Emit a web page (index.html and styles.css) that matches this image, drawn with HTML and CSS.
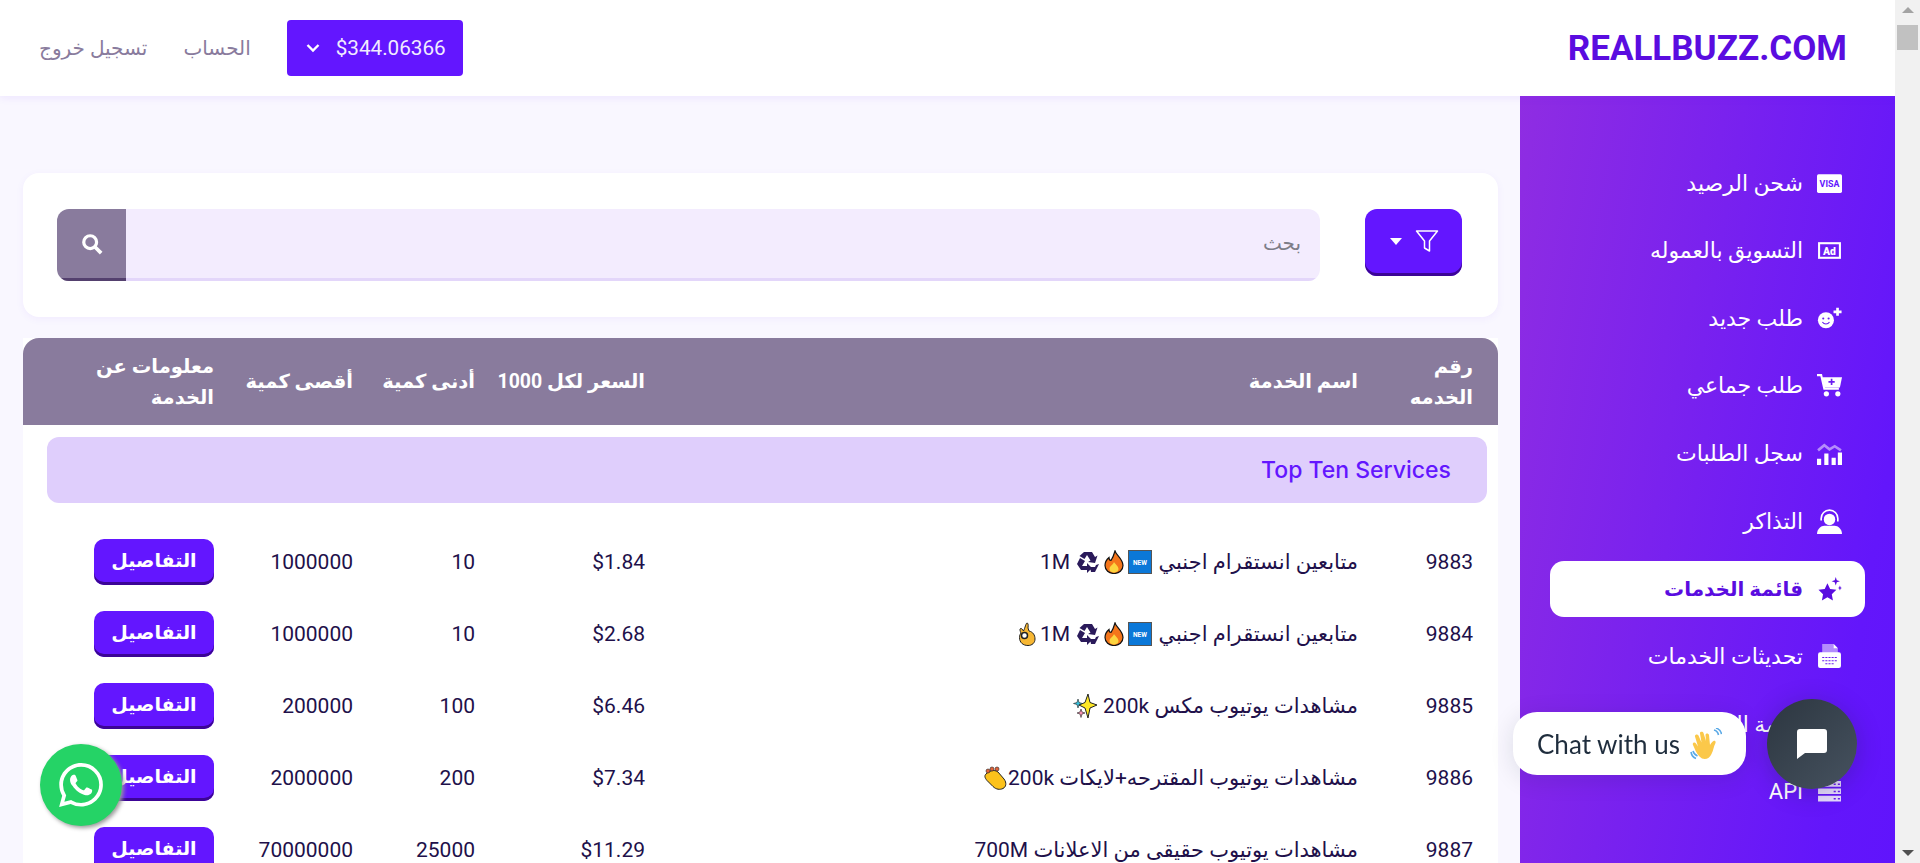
FILE: index.html
```html
<!DOCTYPE html>
<html lang="ar">

<head>
 <meta charset="UTF-8">
 <title>REALLBUZZ.COM</title>
 <link rel="stylesheet" href="styles.css">
</head>

<body>

 <svg class="defs" aria-hidden="true">
  <symbol id="e-new" viewBox="0 0 24 24">
   <rect x="0.5" y="0.5" width="23" height="23" fill="#0b78d8" stroke="#555"/>
   <text x="12" y="14.500" font-size="6.500" font-weight="700" fill="#fff" text-anchor="middle" font-family="Roboto">NEW</text>
  </symbol>
  <symbol id="e-fire" viewBox="0 0 24 24">
   <path d="M13 1c1 4 8 8 8 14.500 0 4.500-4 8-9 8s-9-3.500-9-8c0-3 1-5.500 4-8 0 2 1 3 2 3 2-3 3-6 4-9.500z" fill="#f4761b" stroke="#111" stroke-width="1.200"/>
   <path d="M12 12c1 2 4.500 4 4.500 7 0 2-2 3.500-4.500 3.500S7.500 21 7.500 19c0-3 3.500-4 4.500-7z" fill="#fcd53f"/>
  </symbol>
  <symbol id="e-recycle" viewBox="0 0 24 24">
   <path d="M8 2h8l3 5 2.500-1.500L19 13l-7-1 2.500-1.500L11 5 8.500 9 3.500 6zM1 14l3-6 5 3-3 5h5v-3l5 5-5 5v-3H5zM23 14l-4 8h-4l-1-5h5l1-2z" fill="#2a1a5a"/>
  </symbol>
  <symbol id="e-ok" viewBox="0 0 24 24">
   <path d="M12 1c1 0 1.500 1.500 1 5l1 3c4 1 6 4 6 8 0 4-3 6.500-7 6.500-5 0-8.500-3-8.500-8 0-2 .5-3 1.500-4.500-1-2-1.500-4-.5-4.500 1-.5 2 1 3 2.500C10 6 11 1 12 1z" fill="#f7b733" stroke="#222"/>
   <circle cx="9.500" cy="13.500" r="3" fill="#fff" stroke="#222" stroke-width="1.500"/>
  </symbol>
  <symbol id="e-sparkle" viewBox="0 0 24 24">
   <path d="M15 0l2 8.500 7 2.500-7 3-2 10-3-10-6-3 6-2.500z" fill="#fde725" stroke="#222"/>
   <path d="M5 5l1 3.500 3.500 1-3.500 1-1 3.500-1-3.500-3.500-1 3.500-1z" fill="#35c4e0" stroke="#222" stroke-width=".6"/>
   <path d="M8 15l1 3 3 1-3 1-1 3.500-1-3.500-3-1 3-1z" fill="#f58fb0" stroke="#222" stroke-width=".6"/>
  </symbol>
  <symbol id="e-clap" viewBox="0 0 24 24">
   <path d="M3 8c3-3 8-5 12-2l6 7c3 4 2 8-1 9.500-3 1.500-7 1-10-2l-6-6C2 12 1 10 3 8z" fill="#fcc21b" stroke="#222"/>
   <circle cx="9" cy="3" r="2" fill="#e2633a" stroke="#222" stroke-width=".6"/><circle cx="14" cy="3" r="2" fill="#e2633a" stroke="#222" stroke-width=".6"/><circle cx="5" cy="5" r="2" fill="#e2633a" stroke="#222" stroke-width=".6"/>
  </symbol>
 </svg>

 <div class="app">
  <div class="page" dir="rtl">

   <header class="topbar">
    <a class="logo">REALLBUZZ.COM</a>
    <nav class="top-links">
     <button class="balance">
      <span>$344.06366</span>
      <svg viewBox="0 0 14 10" width="14" height="10"><path d="M1.500 2l5.500 5.500L12.500 2" fill="none" stroke="#fff" stroke-width="2.400"/></svg>
     </button>
     <a class="top-link">الحساب</a>
     <a class="top-link">تسجيل خروج</a>
    </nav>
   </header>

   <div class="content">
    <aside class="sidebar">
     <a class="side-item"><svg class="side-icon" viewBox="0 0 24 18"><rect width="24" height="18" rx="1.500" fill="#fff"/><text x="12" y="12.500" font-size="8.500" font-weight="700" fill="#6316ff" text-anchor="middle" font-family="Roboto">VISA</text></svg><span>شحن الرصيد</span></a>
     <a class="side-item"><svg class="side-icon" viewBox="0 0 24 18"><rect x="2" y="2" width="20" height="14" fill="none" stroke="#fff" stroke-width="2"/><text x="12" y="13" font-size="10" font-weight="900" fill="#fff" text-anchor="middle" font-family="Roboto">Ad</text></svg><span>التسويق بالعموله</span></a>
     <a class="side-item"><svg class="side-icon" viewBox="0 0 28 24"><circle cx="10" cy="14" r="9" fill="#fff"/><circle cx="7" cy="12" r="1.200" fill="#6b1cf0"/><circle cx="13" cy="12" r="1.200" fill="#6b1cf0"/><path d="M6 16c2 3 6 3 8 0" fill="none" stroke="#6b1cf0" stroke-width="1.200"/><path d="M23 0v9M18.500 4.500h9" stroke="#fff" stroke-width="3"/></svg><span>طلب جديد</span></a>
     <a class="side-item"><svg class="side-icon" viewBox="0 0 24 22"><path d="M0 1h4l3 13h14" fill="none" stroke="#fff" stroke-width="2"/><path d="M5 3h19l-2 10H7z" fill="#fff"/><circle cx="9" cy="19" r="2.500" fill="#fff"/><circle cx="20" cy="19" r="2.500" fill="#fff"/><path d="M14 4.500v6M11 7.500h6" stroke="#6b1cf0" stroke-width="1.600"/></svg><span>طلب جماعي</span></a>
     <a class="side-item"><svg class="side-icon" viewBox="0 0 24 22"><path d="M1 8l6-5 5 4 5-3 6 4" fill="none" stroke="#fff" stroke-opacity=".5" stroke-width="2.500"/><path d="M0 16h4v6H0zM7 11h4v11H7zM14 15h4v7h-4zM20 10h4v12h-4z" fill="#fff"/></svg><span>سجل الطلبات</span></a>
     <a class="side-item"><svg class="side-icon" viewBox="0 0 24 24"><path d="M0 24c0-5 4-8 7-8h10c3 0 7 3 7 8z" fill="#fff"/><circle cx="12" cy="10" r="5.500" fill="#fff"/><path d="M4 11V9a8 8 0 0116 0v3" fill="none" stroke="#fff" stroke-width="1.600"/></svg><span>التذاكر</span></a>
     <a class="side-item active"><svg class="side-icon" viewBox="0 0 24 24"><path d="M10 7l2.600 5.500 6 .8-4.400 4.200 1.100 6-5.300-3-5.300 3 1.100-6L1.400 13.300l6-.8z" fill="#5a0ce0"/><path d="M18 1l1 3 3 1-3 1-1 3-1-3-3-1 3-1zM22 9l.700 2 1.300.5-1.300.5-.700 2-.700-2-1.300-.5 1.300-.5z" fill="#5a0ce0"/></svg><span>قائمة الخدمات</span></a>
     <a class="side-item"><svg class="side-icon" viewBox="0 0 24 24"><path d="M5 0h11l4 4v8H5z" fill="#fff" fill-opacity=".5"/><path d="M16 0l4 4h-4z" fill="#fff"/><rect x="1" y="8" width="22" height="15" rx="2" fill="#fff"/><path d="M5 13h14M5 16h14M8 19h8" stroke="#6b1cf0" stroke-width="1" stroke-dasharray="2 1"/></svg><span>تحديثات الخدمات</span></a>
     <a class="side-item"><svg class="side-icon" viewBox="0 0 24 24"><circle cx="12" cy="12" r="10" fill="#fff"/></svg><span>خدمة العملاء</span></a>
     <a class="side-item"><svg class="side-icon" viewBox="0 0 24 20"><path d="M1 0h22v5.500H1zM1 7h22v5.500H1zM1 14h22v5.500H1z" fill="#fff" fill-opacity=".85"/><path d="M16 3h2M20 3h2M16 10h2M20 10h2M16 17h2M20 17h2" stroke="#6b1cf0" stroke-width="1.500"/></svg><span>API</span></a>
    </aside>

    <main class="main">
     <section class="filter-card">
      <button class="filter-btn">
       <svg viewBox="0 0 24 24" width="24" height="24"><path d="M1.500 2h21l-8 10v10l-5-3v-7z" fill="none" stroke="#fff" stroke-width="1.500" stroke-linejoin="round"/></svg>
       <span class="caret"></span>
      </button>
      <form class="search">
       <input class="search-input" type="text" placeholder="بحث">
       <button class="search-btn" type="button">
        <svg viewBox="0 0 24 24" width="22" height="22"><circle cx="10" cy="10" r="7" fill="none" stroke="#fff" stroke-width="3.500"/><path d="M15 15l7 7" stroke="#fff" stroke-width="4"/></svg>
       </button>
      </form>
     </section>

     <table class="services">
      <colgroup>
       <col class="c-id"><col class="c-name"><col class="c-price"><col class="c-min"><col class="c-max"><col class="c-info">
      </colgroup>
      <thead>
       <tr>
        <th>رقم<br>الخدمه</th>
        <th>اسم الخدمة</th>
        <th>السعر لكل 1000</th>
        <th>أدنى كمية</th>
        <th>أقصى كمية</th>
        <th>معلومات عن<br>الخدمة</th>
       </tr>
      </thead>
      <tbody>
       <tr class="group-row"><td colspan="6"><div class="group-title">Top Ten Services</div></td></tr>
       <tr>
        <td>9883</td>
        <td>متابعين انستقرام اجنبي <svg class="emo"><use href="#e-new"/></svg><svg class="emo"><use href="#e-fire"/></svg><svg class="emo"><use href="#e-recycle"/></svg> 1M</td>
        <td>$1.84</td><td>10</td><td>1000000</td>
        <td><button class="details">التفاصيل</button></td>
       </tr>
       <tr>
        <td>9884</td>
        <td>متابعين انستقرام اجنبي <svg class="emo"><use href="#e-new"/></svg><svg class="emo"><use href="#e-fire"/></svg><svg class="emo"><use href="#e-recycle"/></svg> 1M<svg class="emo"><use href="#e-ok"/></svg></td>
        <td>$2.68</td><td>10</td><td>1000000</td>
        <td><button class="details">التفاصيل</button></td>
       </tr>
       <tr>
        <td>9885</td>
        <td>مشاهدات يوتيوب مكس 200k <svg class="emo"><use href="#e-sparkle"/></svg></td>
        <td>$6.46</td><td>100</td><td>200000</td>
        <td><button class="details">التفاصيل</button></td>
       </tr>
       <tr>
        <td>9886</td>
        <td>مشاهدات يوتيوب المقترحه+لايكات 200k<svg class="emo"><use href="#e-clap"/></svg></td>
        <td>$7.34</td><td>200</td><td>2000000</td>
        <td><button class="details">التفاصيل</button></td>
       </tr>
       <tr>
        <td>9887</td>
        <td>مشاهدات يوتيوب حقيقى من الاعلانات 700M</td>
        <td>$11.29</td><td>25000</td><td>70000000</td>
        <td><button class="details">التفاصيل</button></td>
       </tr>
      </tbody>
     </table>
    </main>
   </div>
  </div>

  <div class="scrollbar">
   <span class="arrow-up"></span>
   <span class="thumb"></span>
   <span class="arrow-down"></span>
  </div>
 </div>

 <a class="whatsapp">
  <svg viewBox="0 0 24 24" width="44" height="44"><path fill="#fff" d="M17.472 14.382c-.297-.149-1.758-.867-2.03-.967-.273-.099-.471-.148-.67.15-.197.297-.767.966-.94 1.164-.173.199-.347.223-.644.075-.297-.15-1.255-.463-2.39-1.475-.883-.788-1.48-1.761-1.653-2.059-.173-.297-.018-.458.13-.606.134-.133.298-.347.446-.52.149-.174.198-.298.298-.497.099-.198.05-.371-.025-.52-.075-.149-.669-1.612-.916-2.207-.242-.579-.487-.5-.669-.51-.173-.008-.371-.01-.57-.01-.198 0-.52.074-.792.372-.272.297-1.04 1.016-1.04 2.479 0 1.462 1.065 2.875 1.213 3.074.149.198 2.096 3.2 5.077 4.487.709.306 1.262.489 1.694.625.712.227 1.36.195 1.871.118.571-.085 1.758-.719 2.006-1.413.248-.694.248-1.289.173-1.413-.074-.124-.272-.198-.57-.347m-5.421 7.403h-.004a9.87 9.87 0 01-5.031-1.378l-.361-.214-3.741.982.998-3.648-.235-.374a9.86 9.86 0 01-1.51-5.26c.001-5.45 4.436-9.884 9.888-9.884 2.64 0 5.122 1.03 6.988 2.898a9.825 9.825 0 012.893 6.994c-.003 5.45-4.437 9.884-9.885 9.884m8.413-18.297A11.815 11.815 0 0012.05 0C5.495 0 .16 5.335.157 11.892c0 2.096.547 4.142 1.588 5.945L.057 24l6.305-1.654a11.882 11.882 0 005.683 1.448h.005c6.554 0 11.89-5.335 11.893-11.893a11.821 11.821 0 00-3.48-8.413z"/></svg>
 </a>

 <div class="chat-label" dir="ltr">
  <span>Chat with us</span>
  <svg viewBox="0 0 32 32" width="32" height="32"><path d="M9 28c-3-3-4-7-6-11-1-2 1.500-3.500 3-1.500l2 3-3-10c-.5-2 2.500-3 3.500-1l3 7-1.500-9c-.5-2 3-2.500 3.500-.5l2.500 8-.5-6c0-2 3-2 3.500 0l1 10c1-2 2-3 3.500-4 1.500-.5 2.500.5 2 2-2 4-2 7-4 11-2 5-8 7-12 2.500z" fill="#fbc84a"/><path d="M24 2c2 .5 4 2.500 4.500 5M26 0c3 1 5 3 5.500 6M3 23c.5 2 2 4 4.500 5M1 24c.5 3 2.500 5.500 5 6.500" fill="none" stroke="#5aa9e6" stroke-width="1.600"/></svg>
 </div>
 <a class="chat-btn">
  <svg viewBox="0 0 30 30" width="30" height="30"><path d="M3 0h24a3 3 0 013 3v18a3 3 0 01-3 3H8l-8 6V3a3 3 0 013-3z" fill="#fff"/></svg>
 </a>

</body>

</html>
```

FILE: styles.css
```css
*,
*::before,
*::after {
 box-sizing: border-box;
}

html,
body {
 height: 100%;
}

body {
 margin: 0;
 overflow: hidden;
 background: #f9f7ff;
 color: #21104a;
 font-family: Roboto, "DejaVu Sans", sans-serif;
 font-size: 21px;
}

.defs {
 display: none;
}

a {
 text-decoration: none;
 color: inherit;
}

button {
 font-family: inherit;
 border: 0;
 cursor: pointer;
}

.app {
 display: flex;
 height: 100%;
}

.page {
 flex: 1;
 min-width: 0;
 display: flex;
 flex-direction: column;
}

/* top bar */

.topbar {
 display: flex;
 justify-content: space-between;
 align-items: center;
 height: 96px;
 padding: 0 48px 0 39px;
 background: #fff;
 box-shadow: 0 2px 8px rgba(99, 22, 255, .08);
 position: relative;
}

.logo {
 font-size: 35px;
 font-weight: 700;
 color: #5a0ce0;
 direction: ltr;
}

.top-links {
 display: flex;
 align-items: center;
 gap: 36px;
}

.balance {
 display: flex;
 align-items: center;
 gap: 16px;
 height: 56px;
 width: 176px;
 padding: 0 17px;
 background: #6316ff;
 color: #f1ecff;
 border-radius: 4px;
 font-size: 20.700px;
}

.top-link {
 color: #897b9d;
 font-size: 20px;
}

/* sidebar */

.content {
 flex: 1;
 display: flex;
 min-height: 0;
}

.sidebar {
 flex: 0 0 375px;
 display: flex;
 flex-direction: column;
 gap: 11.670px;
 padding: 59px 30px 0;
 background: linear-gradient(100deg, #8f2de2 0%, #6316fb 85%, #6014fc 100%);
}

.side-item {
 display: flex;
 align-items: center;
 gap: 14px;
 height: 56px;
 padding: 0 23px 0 0;
 border-radius: 14px;
 color: #fff;
 font-size: 22px;
}

.side-item.active {
 background: #fff;
 color: #5a0ce0;
 font-weight: 700;
 font-size: 20px;
}

.side-icon {
 width: 25px;
 height: 25px;
 flex: none;
}

/* main */

.main {
 flex: 1;
 min-width: 0;
 padding: 77px 22px 0 23px;
 overflow: hidden;
}

.filter-card {
 display: flex;
 align-items: flex-start;
 gap: 45px;
 height: 144px;
 padding: 36px 36px 0 34px;
 background: #fff;
 border-radius: 16px;
 box-shadow: 0 2px 8px rgba(99, 22, 255, .05);
}

.filter-btn {
 flex: none;
 display: flex;
 align-items: center;
 gap: 13px;
 width: 97px;
 height: 67px;
 padding: 0 23px 3px;
 background: #6316ff;
 border-radius: 12px;
 box-shadow: inset 0 -3px 0 #3c0596;
}

.caret {
 width: 0;
 height: 0;
 border: 6px solid transparent;
 border-top: 7px solid #fff;
 border-bottom: 0;
}

.search {
 flex: 1;
 display: flex;
 height: 72px;
 border-radius: 12px;
 overflow: hidden;
}

.search-input {
 flex: 1;
 min-width: 0;
 padding: 0 19px 2px;
 border: 0;
 border-bottom: 3px solid #e3d6fa;
 background: #f3ecfe;
 font-family: inherit;
 font-size: 20px;
 outline: 0;
}

.search-input::placeholder {
 color: #7d7d88;
}

.search-btn {
 flex: none;
 width: 69px;
 display: grid;
 place-items: center;
 background: #897b9d;
 border-bottom: 3px solid #54406e;
}

/* table */

.services {
 width: 100%;
 margin-top: 21px;
 table-layout: fixed;
 border-collapse: separate;
 border-spacing: 0;
 background: #fff;
}

.c-id { width: 115px; }
.c-name { width: 713px; }
.c-price { width: 170px; }
.c-min { width: 122px; }
.c-max { width: 139px; }

.services th {
 height: 87px;
 padding: 0 25px 0 0;
 background: #897b9d;
 color: #fff;
 font-size: 19.500px;
 font-weight: 700;
 line-height: 31px;
 text-align: right;
 white-space: nowrap;
}

.services th:first-child {
 border-top-right-radius: 16px;
}

.services th:last-child {
 border-top-left-radius: 16px;
}

.services td {
 height: 72px;
 padding: 0 25px 0 0;
 white-space: nowrap;
 vertical-align: middle;
}

.services .group-row td {
 height: auto;
 padding: 12px 11px 23px 24px;
}

.group-title {
 height: 66px;
 line-height: 66px;
 padding: 0 36px 0 0;
 background: #dfcefc;
 border-radius: 12px;
 color: #6316ff;
 font-family: Inter, sans-serif;
 font-size: 23px;
 font-weight: 500;
 text-align: right;
}

.emo {
 width: 24px;
 height: 24px;
 vertical-align: -5px;
 margin: 0 1px;
}

.details {
 width: 120px;
 height: 46px;
 background: #6316ff;
 color: #fff;
 border-radius: 10px;
 box-shadow: inset 0 -3px 0 #3c0596;
 font-size: 19px;
 font-weight: 700;
 padding: 0 0 3px;
 display: block;
}

/* scrollbar */

.scrollbar {
 flex: 0 0 25px;
 position: relative;
 background: #f1f1f1;
}

.thumb {
 position: absolute;
 top: 25px;
 left: 2px;
 right: 2px;
 height: 25px;
 background: #c1c1c1;
}

.arrow-up,
.arrow-down {
 position: absolute;
 left: 7px;
 width: 0;
 height: 0;
 border: 6px solid transparent;
}

.arrow-up {
 top: 7px;
 border-top: 0;
 border-bottom: 6px solid #a3a3a3;
}

.arrow-down {
 bottom: 7px;
 border-bottom: 0;
 border-top: 6px solid #505050;
}

/* floating widgets */

.whatsapp {
 position: fixed;
 left: 40px;
 top: 744px;
 width: 82px;
 height: 82px;
 display: grid;
 place-items: center;
 border-radius: 50%;
 background: #25d366;
 box-shadow: 2px 2px 4px #999;
}

.chat-label {
 position: fixed;
 left: 1513px;
 top: 712px;
 width: 233px;
 height: 63px;
 display: flex;
 align-items: center;
 gap: 10px;
 padding-left: 24px;
 background: #fff;
 border-radius: 24px;
 box-shadow: 0 4px 24px rgba(20, 30, 50, .12);
 color: #1f2d3d;
 font-family: Lato, sans-serif;
 font-size: 26px;
}

.chat-btn {
 position: fixed;
 left: 1767px;
 top: 699px;
 width: 90px;
 height: 90px;
 display: grid;
 place-items: center;
 border-radius: 50%;
 background: linear-gradient(135deg, #2c3640, #46525f);
 box-shadow: 0 4px 24px rgba(20, 30, 50, .25);
}
```
